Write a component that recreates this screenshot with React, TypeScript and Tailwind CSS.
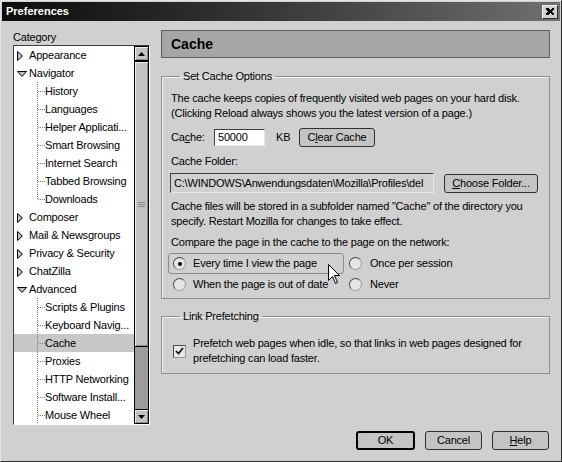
import React from "react";

type TreeItem = {
  label: string;
  kind: "closed" | "open" | "child";
  last?: boolean;
  selected?: boolean;
};

const tree: TreeItem[] = [
  { label: "Appearance", kind: "closed" },
  { label: "Navigator", kind: "open" },
  { label: "History", kind: "child" },
  { label: "Languages", kind: "child" },
  { label: "Helper Applicati...", kind: "child" },
  { label: "Smart Browsing", kind: "child" },
  { label: "Internet Search", kind: "child" },
  { label: "Tabbed Browsing", kind: "child" },
  { label: "Downloads", kind: "child", last: true },
  { label: "Composer", kind: "closed" },
  { label: "Mail & Newsgroups", kind: "closed" },
  { label: "Privacy & Security", kind: "closed" },
  { label: "ChatZilla", kind: "closed" },
  { label: "Advanced", kind: "open" },
  { label: "Scripts & Plugins", kind: "child" },
  { label: "Keyboard Navig...", kind: "child" },
  { label: "Cache", kind: "child", selected: true },
  { label: "Proxies", kind: "child" },
  { label: "HTTP Networking", kind: "child" },
  { label: "Software Install...", kind: "child" },
  { label: "Mouse Wheel", kind: "child" },
];

const TreeRow: React.FC<{ item: TreeItem }> = ({ item }) => (
  <div
    className={`flex h-[18px] items-center whitespace-nowrap ${
      item.selected ? "bg-[#c8c8c8]" : ""
    }`}
  >
    {item.kind === "child" ? (
      <>
        <span className="w-[23px] shrink-0" />
        <svg width="8" height="18" className="shrink-0" shapeRendering="crispEdges">
          <line
            x1="0.5"
            y1="0"
            x2="0.5"
            y2={item.last ? 9 : 18}
            stroke="#808080"
            strokeDasharray="1 1"
          />
          <line x1="1" y1="9.5" x2="8" y2="9.5" stroke="#808080" strokeDasharray="1 1" />
        </svg>
        <span>{item.label}</span>
      </>
    ) : (
      <>
        <span className="w-[3px] shrink-0" />
        <svg width="10" height="18" className="shrink-0">
          {item.kind === "closed" ? (
            <polygon points="0.5,5.5 5.5,10 0.5,14.5" fill="#bdbdbd" stroke="#000" />
          ) : (
            <polygon points="0.5,7.5 9.5,7.5 5,12.5" fill="#bdbdbd" stroke="#000" />
          )}
        </svg>
        <span className="w-[2px] shrink-0" />
        <span>{item.label}</span>
      </>
    )}
  </div>
);

const ScrollButton: React.FC<{ up?: boolean }> = ({ up }) => (
  <div className="flex h-[15px] items-center justify-center border border-black bg-[#c2c2c2] shadow-[inset_1px_1px_0_#ececec,inset_-1px_-1px_0_#8a8a8a]">
    <svg width="7" height="4">
      {up ? <polygon points="3.5,0 7,4 0,4" fill="#000" /> : <polygon points="0,0 7,0 3.5,4" fill="#000" />}
    </svg>
  </div>
);

const Radio: React.FC<{ checked?: boolean }> = ({ checked }) => (
  <span className="flex h-[13px] w-[13px] shrink-0 items-center justify-center rounded-full border border-t-[#4a4a4a] border-l-[#4a4a4a] border-b-[#9a9a9a] border-r-[#9a9a9a] bg-[#e6e6e6]">
    {checked && <span className="h-[4px] w-[4px] rounded-full bg-black" />}
  </span>
);

const Button: React.FC<{ className?: string; def?: boolean; children: React.ReactNode }> = ({
  className,
  def,
  children,
}) => (
  <div
    className={`flex items-center justify-center rounded-[3px] bg-[#c4c4c4] ${
      def ? "border-2 border-black" : "border border-[#303030]"
    } ${className ?? ""}`}
  >
    {children}
  </div>
);

export default function App() {
  return (
    <div className="flex h-[462px] w-[562px] flex-col border border-t-[#e4e4e4] border-l-[#e4e4e4] border-b-[#303030] border-r-[#303030] bg-[#d0d0d0] p-[1px] font-['Liberation_Sans',Arial,sans-serif] text-[11px] tracking-[-0.2px] text-black">
      {/* title bar */}
      <div className="flex h-[19px] shrink-0 items-center justify-between bg-gradient-to-r from-[#0c0c0c] to-[#707070] pl-[4px] pr-[2px]">
        <span className="text-[11px] font-bold tracking-normal text-white">Preferences</span>
        <div className="flex h-[14px] w-[16px] items-center justify-center border border-t-[#f0f0f0] border-l-[#f0f0f0] border-b-[#303030] border-r-[#303030] bg-[#d0d0d0]">
          <svg width="8" height="7" shapeRendering="crispEdges">
            <path d="M0 0h2l2 2 2-2h2v1l-2 2.5 2 2.5v1h-2l-2-2-2 2h-2v-1l2-2.5-2-2.5z" fill="#000" />
          </svg>
        </div>
      </div>

      <div className="flex flex-1 gap-[11px] pt-[9px] pl-[11px] pr-[10px] pb-[10px]">
        {/* category tree */}
        <div className="flex w-[137px] shrink-0 flex-col">
          <div className="h-[15px] leading-[15px]">Category</div>
          <div className="flex h-[380px] border border-t-[#404040] border-l-[#404040] border-b-white border-r-white bg-white">
            <div className="min-w-0 flex-1 overflow-hidden">
              {tree.map((item) => (
                <TreeRow key={item.label} item={item} />
              ))}
            </div>
            <div className="flex w-[15px] shrink-0 flex-col bg-[#a0a0a0]">
              <ScrollButton up />
              <div className="flex h-[286px] items-center justify-center border border-black bg-[#c2c2c2] shadow-[inset_1px_1px_0_#ececec,inset_-1px_-1px_0_#8a8a8a]">
                <div className="flex w-[7px] flex-col gap-[1px]">
                  <span className="h-[1px] bg-[#8a8a8a]" />
                  <span className="h-[1px] bg-[#8a8a8a]" />
                  <span className="h-[1px] bg-[#8a8a8a]" />
                </div>
              </div>
              <div className="flex-1 border-x border-black bg-[#9c9c9c]" />
              <ScrollButton />
            </div>
          </div>
        </div>

        {/* cache panel */}
        <div className="flex min-w-0 flex-1 flex-col">
          <div className="flex h-[28px] shrink-0 items-center border border-[#606060] bg-[#a6a6a6] pl-[9px] text-[14px] font-bold tracking-normal">
            Cache
          </div>

          <fieldset className="mt-[12px] border border-[#909090] px-[9px] pt-[8px] pb-[3px] shadow-[inset_1px_1px_0_#f2f2f2]">
            <legend className="ml-[9px] px-[3px] leading-[13px]">Set Cache Options</legend>
            <p className="leading-[15px]">
              The cache keeps copies of frequently visited web pages on your hard disk.
              <br />
              (Clicking Reload always shows you the latest version of a page.)
            </p>
            <div className="mt-[7px] flex h-[19px] items-center">
              <span className="w-[43px]">
                Ca<span className="underline">c</span>he:
              </span>
              <div className="flex h-[17px] w-[51px] items-center border border-t-[#404040] border-l-[#404040] border-b-[#e8e8e8] border-r-[#e8e8e8] bg-white pl-[3px]">
                50000
              </div>
              <span className="ml-[11px] w-[23px]">KB</span>
              <Button className="h-[19px] w-[76px]">
                C<span className="underline">l</span>ear Cache
              </Button>
            </div>
            <div className="mt-[7px] leading-[15px]">Cache Folder:</div>
            <div className="mt-[4px] flex h-[20px] items-center">
              <div className="flex h-[20px] w-[264px] items-center overflow-hidden whitespace-nowrap border border-t-[#404040] border-l-[#404040] border-b-[#e8e8e8] border-r-[#e8e8e8] bg-[#d0d0d0] pl-[3px] -ml-[1px]">
                C:\WINDOWS\Anwendungsdaten\Mozilla\Profiles\del
              </div>
              <Button className="ml-[10px] h-[19px] w-[94px]">
                <span className="underline">C</span>hoose Folder...
              </Button>
            </div>
            <p className="mt-[6px] leading-[15px]">
              Cache files will be stored in a subfolder named "Cache" of the directory you
              <br />
              specify. Restart Mozilla for changes to take effect.
            </p>
            <div className="mt-[6px] leading-[15px]">Compare the page in the cache to the page on the network:</div>
            <div className="relative -ml-[3px] mt-[3px] grid grid-cols-[176px_1fr]">
              <div className="flex h-[21px] items-center gap-[7px] rounded-[3px] border border-[#8c8c8c] pl-[4px]">
                <Radio checked />
                <span>Every time I view the page</span>
              </div>
              <div className="flex h-[21px] items-center gap-[8px] pl-[5px]">
                <Radio />
                <span>Once per session</span>
              </div>
              <div className="flex h-[21px] items-center gap-[7px] pl-[5px]">
                <Radio />
                <span>When the page is out of date</span>
              </div>
              <div className="flex h-[21px] items-center gap-[8px] pl-[5px]">
                <Radio />
                <span>Never</span>
              </div>
              {/* mouse pointer */}
              <svg width="12" height="20" className="absolute left-[160px] top-[11px]">
                <path
                  d="M0.5 0.5V16.5L4.5 12.5L7.5 19.5L9.5 18.5L6.5 11.5H11.5Z"
                  fill="#fff"
                  stroke="#000"
                  strokeLinejoin="miter"
                />
              </svg>
            </div>
          </fieldset>

          <fieldset className="mt-[11px] border border-[#909090] px-[9px] pt-[13px] pb-[7px] shadow-[inset_1px_1px_0_#f2f2f2]">
            <legend className="ml-[9px] px-[3px] leading-[13px]">Link Prefetching</legend>
            <div className="flex items-center gap-[7px]">
              <span className="ml-[2px] flex h-[13px] w-[13px] shrink-0 items-center justify-center border border-t-[#4a4a4a] border-l-[#4a4a4a] border-b-[#9a9a9a] border-r-[#9a9a9a] bg-[#e6e6e6]">
                <svg width="9" height="8">
                  <path d="M1 4l2.5 2.5L8 1" fill="none" stroke="#000" strokeWidth="1.6" />
                </svg>
              </span>
              <p className="leading-[15px]">
                Prefetch web pages when idle, so that links in web pages designed for
                <br />
                prefetching can load faster.
              </p>
            </div>
          </fieldset>

          <div className="mt-auto flex justify-end gap-[10px] pr-[1px]">
            <Button def className="h-[19px] w-[59px]">
              OK
            </Button>
            <Button className="h-[19px] w-[57px]">Cancel</Button>
            <Button className="h-[19px] w-[57px]">
              <span className="underline">H</span>elp
            </Button>
          </div>
        </div>
      </div>
    </div>
  );
}
